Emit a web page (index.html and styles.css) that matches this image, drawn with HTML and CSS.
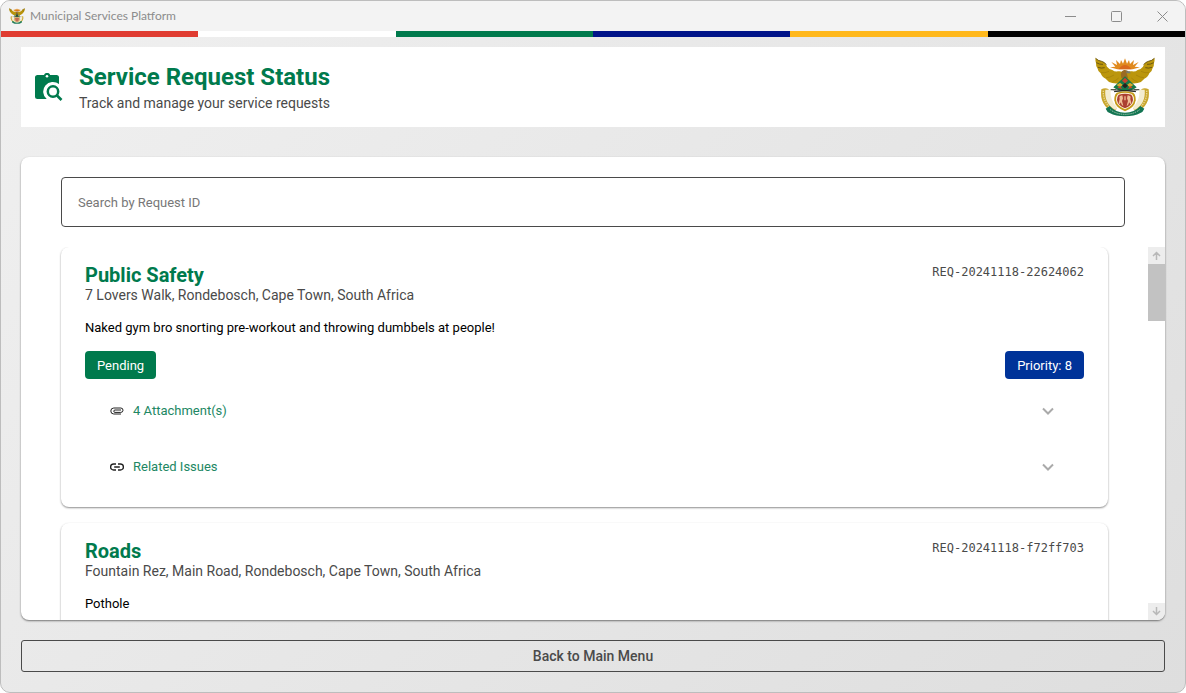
FILE: index.html
```html
<!DOCTYPE html>
<html lang="en">
<head>
<meta charset="utf-8">
<title>Municipal Services Platform</title>
<link rel="stylesheet" href="styles.css">
</head>
<body>
<svg class="defs" aria-hidden="true">
  <symbol id="emblem" viewBox="45 33 180 180">
    <g fill="#e08a1e">
      <path d="M112 70 90 64l16-2-12-14 17 9-3-15 12 12 3-12 6 11 6-16 6 16 6-11 3 12 12-12-3 15 17-9-12 14 16 2-22 6z"/>
      <path d="M115 70q20-26 40 0z" fill="#d9691c"/>
    </g>
    <g id="side">
      <path d="M64 130q12-6 22 0-2 38 24 58l-9 12q-44-22-37-70z" fill="#c9a72f"/>
      <path d="M76 131h16q-3 32 19 52l-5 9q-34-20-30-61z" fill="#f3ecd0"/>
      <path d="M70 134q-2 34 26 56" fill="none" stroke="#e8d796" stroke-width="4" stroke-dasharray="4 3"/>
      <path d="M46 36q0 10 2 15-1 10 5 17 1 9 9 14 4 12 15 16 8 11 20 13l18 2 20-14V80q-12-6-22-4-8 2-16-4-10-2-16-10-4-12-16-16-10-2-19-10z" fill="#bb960c"/>
      <path d="M47 37q8 8 18 9 10 3 14 10M49 50q10 6 20 5M54 64q10 4 20 1" fill="none" stroke="#5c4a14" stroke-width="2.500"/>
      <path d="M63 80q12 2 24-4M78 95q12 0 24-8M98 107q10-3 18-11" fill="none" stroke="#a27f0b" stroke-width="2"/>
    </g>
    <use href="#side" transform="matrix(-1 0 0 1 270 0)"/>
    <path d="M124 96q-5-20 8-24 10-1 14 5l-6 3 4 16-9 6z" fill="#9a6b24"/>
    <path d="m138 76 11 0 3 6-12 0z" fill="#777b70"/>
    <path d="M135 91 170 124q-12 11-35 11t-35-11z" fill="#16794a"/>
    <path d="m135 95 9 9-9 8-9-8z" fill="#c8432d"/>
    <path d="m120 110 9 7-10 7-9-7zm30 0 10 7-10 7-9-7z" fill="#d7a92b"/>
    <path d="m135 111 9 8-9 8-9-8z" fill="#222"/>
    <path d="m112 125 8-5 7 9zm46 0-8-5-7 9z" fill="#c8432d"/>
    <path d="m98 131 70 6M172 131l-70 6" stroke="#292923" stroke-width="3"/>
    <path d="M92 131h16M162 131h16" stroke="#55584e" stroke-width="4"/>
    <path d="M89 180q18 20 46 20t46-20l12 8q-4 10-12 13-18 10-46 10t-46-10q-8-3-12-13z" fill="#137553"/>
    <path d="M91 191q18 14 44 14t44-14" fill="none" stroke="#c9dfc4" stroke-width="3" stroke-dasharray="3 3"/>
    <path d="M110 140q25-9 50 0 8 8 7 23-2 21-32 33-30-12-32-33-1-15 7-23z" fill="#c49a18"/>
    <path d="M114 144q21-7 42 0 6 6 6 18-2 18-27 28-25-10-27-28 0-12 6-18z" fill="#fff3dc"/>
    <path d="M116 146q19-6 38 0 5 6 5 16-2 16-24 25-22-9-24-25 0-10 5-16z" fill="#ab3f31"/>
    <g fill="#efbd95">
      <path d="m122 149 5-1 2 9-3 8 4 14-4-1-4-9-3 6-3-3 3-13-1-7z"/>
      <path d="m148 149-5-1-2 9 3 8-4 14 4-1 4-9 3 6 3-3-3-13 1-7z"/>
      <path d="M133 151h4v12h-4z"/>
    </g>
  </symbol>
  <symbol id="attachment" viewBox="0 0 14 8">
    <path d="M11 7H3.800a3 3 0 0 1 0-6h7a2.200 2.200 0 0 1 0 4.400H5a1.200 1.200 0 0 1 0-2.400h6" fill="none" stroke="currentColor" stroke-width="1"/>
  </symbol>
  <symbol id="link" viewBox="0 0 14 8">
    <path d="M6 1H3.600a3 3 0 0 0 0 6H6M8 1h2.400a3 3 0 0 1 0 6H8M4.200 4h5.600" fill="none" stroke="currentColor" stroke-width="1.400"/>
  </symbol>
  <symbol id="chevron" viewBox="0 0 12 8">
    <path d="m1 1.500 5 5 5-5" fill="none" stroke="currentColor" stroke-width="2"/>
  </symbol>
  <symbol id="arrow" viewBox="0 0 9 9">
    <path d="M4.500 9V1.500M1 5l3.500-3.500L8 5" fill="none" stroke="currentColor" stroke-width="1.500"/>
  </symbol>
</svg>
<div class="window">
  <div class="titlebar">
    <svg class="titlebar-logo"><use href="#emblem"/></svg>
    <span class="titlebar-text">Municipal Services Platform</span>
    <button class="caption" aria-label="Minimize"><svg viewBox="0 0 11 11"><path d="M0 5.500h11"/></svg></button>
    <button class="caption" aria-label="Maximize"><svg viewBox="0 0 11 11"><rect x=".5" y=".5" width="10" height="10" rx="1"/></svg></button>
    <button class="caption" aria-label="Close"><svg viewBox="0 0 11 11"><path d="m.5.5 10 10m0-10-10 10"/></svg></button>
  </div>
  <div class="stripes"><i class="red"></i><i class="white"></i><i class="green"></i><i class="blue"></i><i class="gold"></i><i class="black"></i></div>
  <div class="page">
    <header class="header">
      <svg class="header-icon" viewBox="0 0 28 28">
        <path d="M3 2h6a3.300 3.300 0 0 1 6.200 0H21.500A2.500 2.500 0 0 1 24 4.500v6.600A9 9 0 0 0 11.700 26H2.500A2.500 2.500 0 0 1 0 23.500v-19A2.500 2.500 0 0 1 3 2z" fill="currentColor"/>
        <circle cx="12" cy="3.300" r="1.300" fill="#fff"/>
        <circle cx="18" cy="18.500" r="5.200" fill="none" stroke="currentColor" stroke-width="2.500"/>
        <path d="m21.500 22 5 5" stroke="currentColor" stroke-width="2.700"/>
      </svg>
      <div class="header-text">
        <h1>Service Request Status</h1>
        <p>Track and manage your service requests</p>
      </div>
      <svg class="header-logo" role="img" aria-label="Coat of arms"><use href="#emblem"/></svg>
    </header>
    <main class="panel">
      <input class="search" type="text" placeholder="Search by Request ID" aria-label="Search by Request ID">
      <div class="results">
        <div class="list">
          <article class="request">
            <div class="request-top"><h2>Public Safety</h2><span class="request-id">REQ-20241118-22624062</span></div>
            <p class="address">7 Lovers Walk, Rondebosch, Cape Town, South Africa</p>
            <p class="description">Naked gym bro snorting pre-workout and throwing dumbbels at people!</p>
            <div class="badges"><span class="badge status">Pending</span><span class="badge priority">Priority: 8</span></div>
            <button class="expander"><svg class="expander-icon"><use href="#attachment"/></svg><span>4 Attachment(s)</span><svg class="chevron"><use href="#chevron"/></svg></button>
            <button class="expander"><svg class="expander-icon"><use href="#link"/></svg><span>Related Issues</span><svg class="chevron"><use href="#chevron"/></svg></button>
          </article>
          <article class="request">
            <div class="request-top"><h2>Roads</h2><span class="request-id">REQ-20241118-f72ff703</span></div>
            <p class="address">Fountain Rez, Main Road, Rondebosch, Cape Town, South Africa</p>
            <p class="description">Pothole</p>
          </article>
        </div>
        <div class="scrollbar">
          <button class="scroll-button" aria-label="Scroll up"><svg><use href="#arrow"/></svg></button>
          <div class="scroll-track"><div class="scroll-thumb"></div></div>
          <button class="scroll-button down" aria-label="Scroll down"><svg><use href="#arrow"/></svg></button>
        </div>
      </div>
    </main>
    <button class="back">Back to Main Menu</button>
  </div>
</div>
</body>
</html>
```
FILE: styles.css
```css
* { box-sizing: border-box; }
body { margin: 0; background: #fff; font-family: Roboto, sans-serif; font-size: 13px; color: #000; }
h1, h2, p { margin: 0; }
button { font: inherit; border: 0; padding: 0; background: none; }
svg { display: block; flex: none; }
.defs { position: absolute; width: 0; height: 0; }

.window {
  display: flex; flex-direction: column; height: 100vh; overflow: hidden;
  border: 1px solid #bdbdbd; border-radius: 10px;
  background: linear-gradient(135deg, #f0f0f0, #dedede);
}
.titlebar { display: flex; align-items: center; height: 30px; padding-left: 8px; background: #f3f3f3; color: #8c8c8c; }
.titlebar-logo { width: 16px; height: 16px; }
.titlebar-text { flex: 1; margin-left: 5px; font: 12px/16px Lato, sans-serif; }
.caption { display: grid; place-items: center; width: 46px; height: 28px; color: inherit; }
.caption svg { width: 11px; height: 11px; fill: none; stroke: currentColor; }

.stripes { display: grid; grid-template-columns: repeat(6, 1fr); height: 6px; flex: none; }
.red { background: #e03c31; }
.white { background: #fff; }
.green { background: #007a4d; }
.blue { background: #001489; }
.gold { background: #ffb81c; }
.black { background: #000; }

.page { display: flex; flex-direction: column; flex: 1; min-height: 0; padding: 10px 20px 20px; }
.header { display: flex; align-items: center; min-height: 80px; padding: 0 10px 0 14px; background: #fff; }
.header-icon { width: 28px; height: 28px; color: #007a4d; }
.header-text { flex: 1; margin-left: 16px; }
.header h1 { font-size: 24px; line-height: 32px; color: #007a4d; }
.header p { font-size: 14px; line-height: 20px; color: #4a4a4a; }
.header-logo { width: 60px; height: 60px; }

.panel {
  display: flex; flex-direction: column; flex: 1; min-height: 0;
  margin: 30px 0 20px; padding: 20px 0 0 40px; overflow: hidden;
  background: #fff; border-radius: 8px; box-shadow: 0 1px 2px rgba(0, 0, 0, .5);
}
.search {
  height: 50px; flex: none; margin-right: 40px; padding: 0 16px;
  border: 1px solid #4a4a4a; border-radius: 4px; background: #fff; font: inherit; color: #000;
}
.search::placeholder { color: #777; opacity: 1; }
.results { display: flex; flex: 1; min-height: 0; margin-top: 20px; }
.list { flex: 1; overflow: hidden; margin: 0 34px 0 -6px; padding: 0 6px; }
.request { padding: 16px 24px 12px; margin-bottom: 16px; border-radius: 8px; box-shadow: 0 1px 2px rgba(0, 0, 0, .45); }
.request-top { display: flex; justify-content: space-between; }
.request h2 { font-size: 20px; line-height: 24px; color: #007a4d; }
.request-id { font: 12px/18px "DejaVu Sans Mono", monospace; color: #4a4a4a; }
.address { font-size: 14px; line-height: 16px; color: #4a4a4a; }
.description { margin: 16px 0 14px; line-height: 18px; }
.badges { display: flex; justify-content: space-between; margin-bottom: 4px; }
.badge { padding: 6px 12px 4px; border-radius: 4px; line-height: 18px; color: #fff; }
.status { background: #007a4d; }
.priority { background: #003399; }
.expander { display: flex; align-items: center; width: 100%; height: 56px; padding: 0 30px 0 25px; line-height: 16px; text-align: left; color: #218763; }
.expander span { flex: 1; margin-left: 9px; }
.expander-icon { width: 14px; height: 8px; color: #222; }
.chevron { width: 12px; height: 8px; color: #aaa; }

.scrollbar { display: flex; flex-direction: column; width: 17px; }
.scroll-button { display: grid; place-items: center; height: 17px; background: #ededed; color: #b8b8b8; }
.scroll-button svg { width: 9px; height: 9px; }
.down svg { transform: rotate(180deg); }
.scroll-track { flex: 1; }
.scroll-thumb { height: 57px; background: #c2c2c2; }

.back { flex: none; height: 32px; border: 1px solid #4a4a4a; border-radius: 3px; font-size: 14px; font-weight: 500; color: #4a4a4a; }
```
